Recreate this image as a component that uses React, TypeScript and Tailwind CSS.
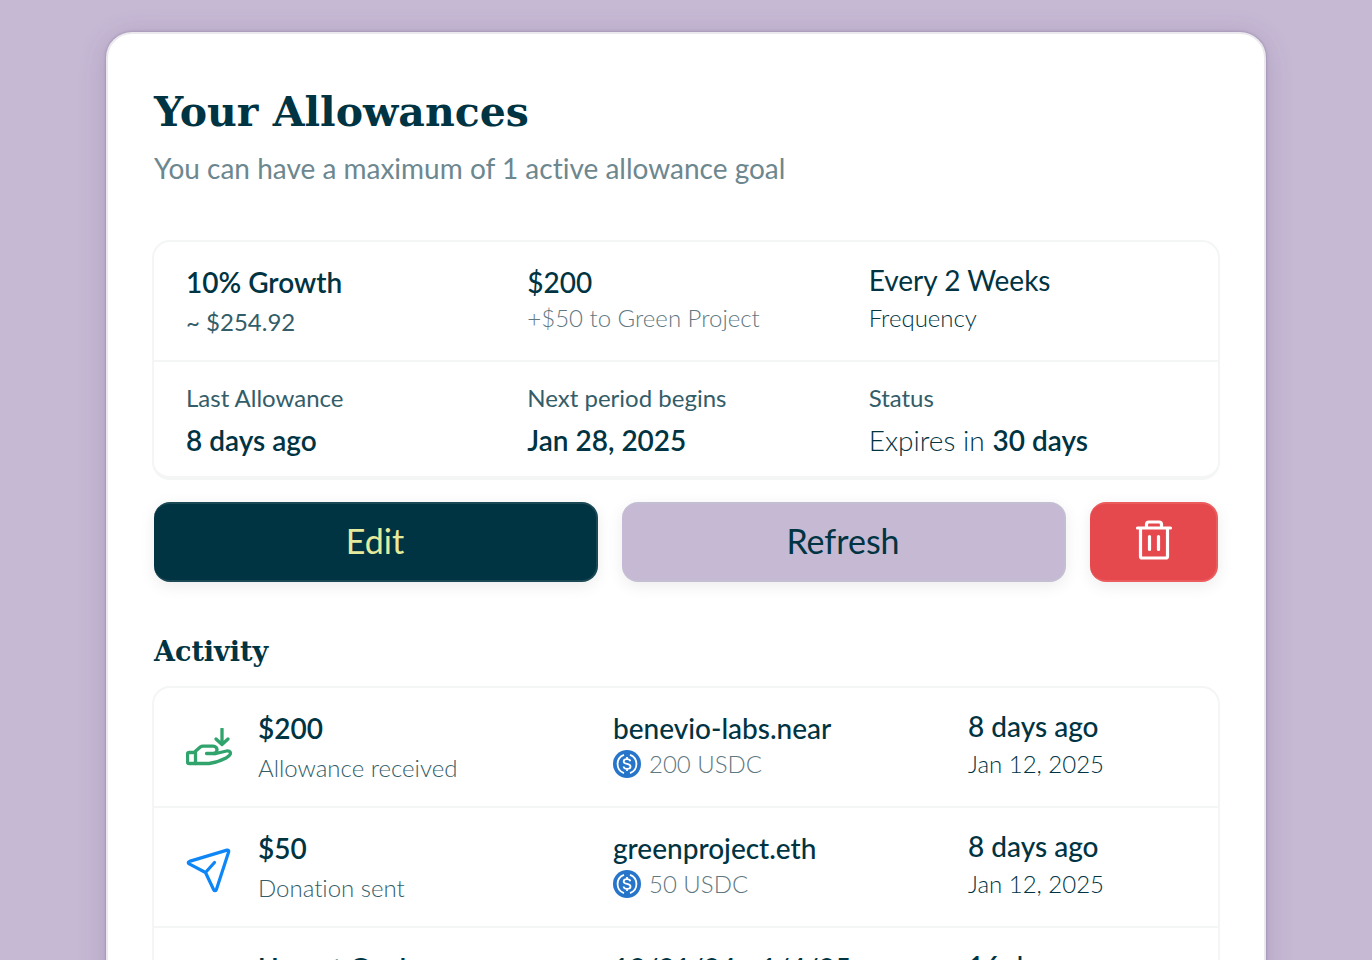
import type { ReactNode } from 'react';

const items = [
  {
    icon: 'received',
    amount: '$200',
    kind: 'Allowance received',
    account: 'benevio-labs.near',
    tokens: '200 USDC',
    when: '8 days ago',
    date: 'Jan 12, 2025',
  },
  {
    icon: 'sent',
    amount: '$50',
    kind: 'Donation sent',
    account: 'greenproject.eth',
    tokens: '50 USDC',
    when: '8 days ago',
    date: 'Jan 12, 2025',
  },
  {
    icon: 'goal',
    amount: 'Unmet Goal',
    kind: 'Allowance missed',
    account: '12/21/24 - 1/4/25',
    tokens: '0 USDC',
    when: '16 days ago',
    date: 'Jan 4, 2025',
  },
];

function ReceivedIcon() {
  return (
    <svg viewBox="2 2 48 40" className="h-10 w-12" fill="none" stroke="#31a36c" strokeWidth="3.300" strokeLinecap="round" strokeLinejoin="round" aria-hidden="true">
      <path d="M38 3v15M32 13l6 5.500 6-5.500" />
      <path d="M9 26.500H5a1.500 1.500 0 0 0-1.500 1.500v8a1.500 1.500 0 0 0 1.500 1.500H25c5.500-.8 11.500-2.500 17-5.500 2.500-1.500 4.500-3 4.500-4.700 0-1.800-2-2.700-4-2.300L32 27.500H22.500" />
      <path d="M11.500 26.500v11M10 26.500l6-5.300q1.500-1 3-1h10c3 0 4 2 4 3.500 0 2-1 3.500-3 3.800" />
    </svg>
  );
}

function SentIcon() {
  return (
    <svg viewBox="1 1 48 48" className="size-12" fill="none" stroke="#0e86f5" strokeWidth="3.200" strokeLinecap="round" strokeLinejoin="round" aria-hidden="true">
      <path d="M42 3.100 4.400 14.400c-1.500.5-1.500 1.900-.2 2.500L20.500 25.500l8.200 17.200c.7 1.400 2.200 1.300 2.700-.2L43.700 4.800c.3-1.200-.5-2-1.700-1.700ZM20.500 25.500l9-10" />
    </svg>
  );
}

function UsdcIcon() {
  return (
    <svg viewBox="0 0 28 28" className="size-7 shrink-0" fill="none" stroke="#fff" aria-hidden="true">
      <circle cx="14" cy="14" r="14" fill="#2775ca" stroke="none" />
      <path d="M11 4.800a9.800 9.800 0 0 0 0 18.400M17 4.800a9.800 9.800 0 0 1 0 18.400" strokeWidth="1.800" />
      <path d="M17.300 11.300c-.3-1.400-1.500-2.100-3.300-2.100-2 0-3.300.9-3.300 2.300 0 3.500 6.800 1.300 6.800 5 0 1.500-1.400 2.400-3.400 2.400s-3.300-.9-3.500-2.400M14 7v2.200M14 18.900V21" strokeWidth="1.800" />
    </svg>
  );
}

function TrashIcon() {
  return (
    <svg viewBox="0 2 40 40" className="size-10" fill="none" stroke="#fff" strokeWidth="3.200" strokeLinecap="round" strokeLinejoin="round" aria-hidden="true">
      <path d="M4.500 10h33M7.500 10v28.500q0 1.500 1.500 1.500h24q1.500 0 1.500-1.500V10M13.500 9.500V6.500q0-2.500 2.500-2.500h10q2.500 0 2.500 2.500v3M16.500 18.500v13M25.500 18.500v13" />
    </svg>
  );
}

function Panel({ children }: { children: ReactNode }) {
  return <div className="-mx-0.5 divide-y-2 divide-[#f4f5f5] rounded-[18px] border-2 border-b-4 border-[#f4f5f5]">{children}</div>;
}

export default function App() {
  return (
    <main className="h-screen overflow-hidden bg-[#c6b9d4] px-[106px] pt-8 font-[Lato,sans-serif] text-[#003443] [font-variant-ligatures:none]">
      <div className="min-h-[1100px] rounded-[26px] border-2 border-[#ebe9ed] bg-white px-[46px] pt-12 shadow-[0_0_3px_rgba(80,60,110,0.4),0_4px_28px_rgba(80,60,110,0.2)]">
        <h1 className="font-['DejaVu_Serif',serif] text-[41px] leading-[60px] font-bold">Your Allowances</h1>
        <p className="mt-1.5 text-[28px] leading-10 text-[#6d878f]">You can have a maximum of 1 active allowance goal</p>

        <div className="mt-[52px]">
          <Panel>
            <div className="grid h-[120px] grid-cols-3 pt-6 pr-2 pl-8">
              <div>
                <div className="text-[28px] leading-8 font-semibold">10% Growth</div>
                <div className="mt-2 text-2xl text-[#335d69]">~ $254.92</div>
              </div>
              <div>
                <div className="text-[28px] leading-8 font-medium">$200</div>
                <div className="mt-1 text-2xl font-light text-[#5f7882]">+$50 to Green Project</div>
              </div>
              <div>
                <div className="text-[28px] leading-7">Every 2 Weeks</div>
                <div className="mt-2 text-2xl font-light">Frequency</div>
              </div>
            </div>
            <div className="grid h-[114px] grid-cols-3 pt-5 pr-2 pl-8">
              <div>
                <div className="text-2xl text-[#335d69]">Last Allowance</div>
                <div className="mt-2 text-[28px] leading-9 font-semibold">8 days ago</div>
              </div>
              <div>
                <div className="text-2xl text-[#335d69]">Next period begins</div>
                <div className="mt-2 text-[28px] leading-9 font-semibold">Jan 28, 2025</div>
              </div>
              <div>
                <div className="text-2xl text-[#335d69]">Status</div>
                <div className="mt-2 flex gap-2 text-[28px] leading-9 font-light">
                  Expires in <strong className="font-semibold">30 days</strong>
                </div>
              </div>
            </div>
          </Panel>
        </div>

        <div className="mt-[22px] flex h-20 gap-6">
          <button className="flex-1 rounded-2xl border-2 border-l-0 border-[#1a4855] bg-[#003443] pb-1 text-[34px] text-[#e6eb9b] shadow-[0_4px_16px_rgba(0,0,0,0.08)]">Edit</button>
          <button className="flex-1 rounded-2xl border-2 border-l-0 border-[#c4bed3] bg-[#c6b9d4] pb-1 text-[34px] shadow-[0_4px_16px_rgba(0,0,0,0.08)]">Refresh</button>
          <button aria-label="Delete allowance" className="flex w-32 items-center justify-center rounded-2xl border-2 border-l-0 border-[#eb5c5f] bg-[#e5484d] pb-1 shadow-[0_4px_16px_rgba(0,0,0,0.08)]">
            <TrashIcon />
          </button>
        </div>

        <h2 className="mt-[50px] mb-3.5 font-['DejaVu_Serif',serif] text-[27px] leading-10 font-bold">Activity</h2>
        <Panel>
          {items.map((item) => (
            <div key={item.icon} className="grid h-[120px] grid-cols-[427fr_355fr_250fr] pt-6 pl-8">
              <div className="flex gap-6">
                <div className="w-12 pt-4">
                  {item.icon === 'received' && <ReceivedIcon />}
                  {item.icon === 'sent' && <SentIcon />}
                </div>
                <div>
                  <div className="text-[28px] leading-8 font-semibold">{item.amount}</div>
                  <div className="mt-2 text-2xl font-light text-[#335d69]">{item.kind}</div>
                </div>
              </div>
              <div>
                <div className="text-[28px] leading-8 font-medium">{item.account}</div>
                <div className="mt-1 flex items-center gap-2 text-2xl font-light text-[#5f7882]">
                  <UsdcIcon />
                  {item.tokens}
                </div>
              </div>
              <div>
                <div className="text-[28px] leading-7 font-medium">{item.when}</div>
                <div className="mt-2 text-2xl font-light">{item.date}</div>
              </div>
            </div>
          ))}
        </Panel>
      </div>
    </main>
  );
}
